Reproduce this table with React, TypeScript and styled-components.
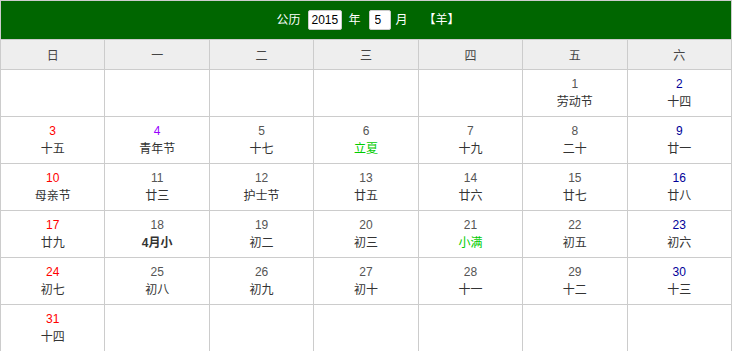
import React from "react";
import styled, { createGlobalStyle } from "styled-components";

const Global = createGlobalStyle`
  html, body { margin: 0; padding: 0; background: #fff; }
  body { font-family: "Liberation Sans", "Noto Sans CJK SC", sans-serif; font-size: 12px; }
`;

const Wrap = styled.div`
  width: 732px;
`;

const TitleBar = styled.div`
  height: 38px;
  background: #006600;
  border: 1px solid #ccc;
  border-bottom: none;
  display: flex;
  align-items: center;
  justify-content: center;
  color: #fff;
  font-size: 12px;
  font-family: "Liberation Sans", "Noto Sans CJK SC", sans-serif;
  padding-left: 4px;
`;

const Label = styled.span<{ $gapL: number; $gapR: number }>`
  margin-left: ${(p) => p.$gapL}px;
  margin-right: ${(p) => p.$gapR}px;
  line-height: 20px;
`;

const Field = styled.input<{ $w: number; $pad: number }>`
  width: ${(p) => p.$w}px;
  height: 20px;
  box-sizing: border-box;
  border: 1px solid #ccc;
  border-radius: 2px;
  background: #fff;
  color: #000;
  font-family: "Liberation Sans", sans-serif;
  font-size: 12px;
  padding: 0 0 0 ${(p) => p.$pad}px;
  margin: 0;
  outline: none;
`;

const Zodiac = styled.span`
  margin-left: 16px;
  line-height: 20px;
`;

const Table = styled.table`
  width: 732px;
  border-collapse: collapse;
  table-layout: fixed;
`;

const HeadCell = styled.th`
  height: 29px;
  padding: 0;
  border: 1px solid #ccc;
  background: #eeeeee;
  color: #444;
  font-weight: normal;
  font-size: 12px;
  text-align: center;
  vertical-align: middle;
`;

const Cell = styled.td`
  height: 46px;
  padding: 0;
  border: 1px solid #ccc;
  text-align: center;
  vertical-align: middle;
`;

const Num = styled.div<{ $c: string }>`
  line-height: 18px;
  font-size: 12px;
  color: ${(p) => p.$c};
`;

const Lunar = styled.div<{ $c: string; $bold?: boolean }>`
  line-height: 18px;
  font-size: 12px;
  color: ${(p) => p.$c};
  font-weight: ${(p) => (p.$bold ? "bold" : "normal")};
`;

type Day = { d: number; l: string; nc?: string; lc?: string; bold?: boolean };

const days: Day[] = [
  { d: 1, l: "劳动节" },
  { d: 2, l: "十四" },
  { d: 3, l: "十五" },
  { d: 4, l: "青年节", nc: "#9900ff" },
  { d: 5, l: "十七" },
  { d: 6, l: "立夏", lc: "#00cc00" },
  { d: 7, l: "十九" },
  { d: 8, l: "二十" },
  { d: 9, l: "廿一" },
  { d: 10, l: "母亲节" },
  { d: 11, l: "廿三" },
  { d: 12, l: "护士节" },
  { d: 13, l: "廿五" },
  { d: 14, l: "廿六" },
  { d: 15, l: "廿七" },
  { d: 16, l: "廿八" },
  { d: 17, l: "廿九" },
  { d: 18, l: "4月小", bold: true },
  { d: 19, l: "初二" },
  { d: 20, l: "初三" },
  { d: 21, l: "小满", lc: "#00cc00" },
  { d: 22, l: "初五" },
  { d: 23, l: "初六" },
  { d: 24, l: "初七" },
  { d: 25, l: "初八" },
  { d: 26, l: "初九" },
  { d: 27, l: "初十" },
  { d: 28, l: "十一" },
  { d: 29, l: "十二" },
  { d: 30, l: "十三" },
  { d: 31, l: "十四" },
];

const weekdays = ["日", "一", "二", "三", "四", "五", "六"];
const startOffset = 5;

export default function App() {
  const cells: (Day | null)[] = [];
  for (let i = 0; i < startOffset; i++) cells.push(null);
  days.forEach((d) => cells.push(d));
  while (cells.length % 7 !== 0) cells.push(null);
  const rows: (Day | null)[][] = [];
  for (let i = 0; i < cells.length; i += 7) rows.push(cells.slice(i, i + 7));

  return (
    <Wrap>
      <Global />
      <TitleBar>
        <Label $gapL={0} $gapR={8}>公历</Label>
        <Field $w={34} $pad={2} defaultValue="2015" />
        <Label $gapL={6} $gapR={8}>年</Label>
        <Field $w={22} $pad={5} defaultValue="5" />
        <Label $gapL={5} $gapR={0}>月</Label>
        <Zodiac>【羊】</Zodiac>
      </TitleBar>
      <Table>
        <thead>
          <tr>
            {weekdays.map((w) => (
              <HeadCell key={w}>{w}</HeadCell>
            ))}
          </tr>
        </thead>
        <tbody>
          {rows.map((r, ri) => (
            <tr key={ri}>
              {r.map((c, ci) => {
                if (!c) return <Cell key={ci} />;
                const base = ci === 0 ? "#ff0000" : ci === 6 ? "#000099" : "#555555";
                return (
                  <Cell key={ci}>
                    <Num $c={c.nc ?? base}>{c.d}</Num>
                    <Lunar $c={c.lc ?? "#333333"} $bold={c.bold}>
                      {c.l}
                    </Lunar>
                  </Cell>
                );
              })}
            </tr>
          ))}
        </tbody>
      </Table>
    </Wrap>
  );
}
